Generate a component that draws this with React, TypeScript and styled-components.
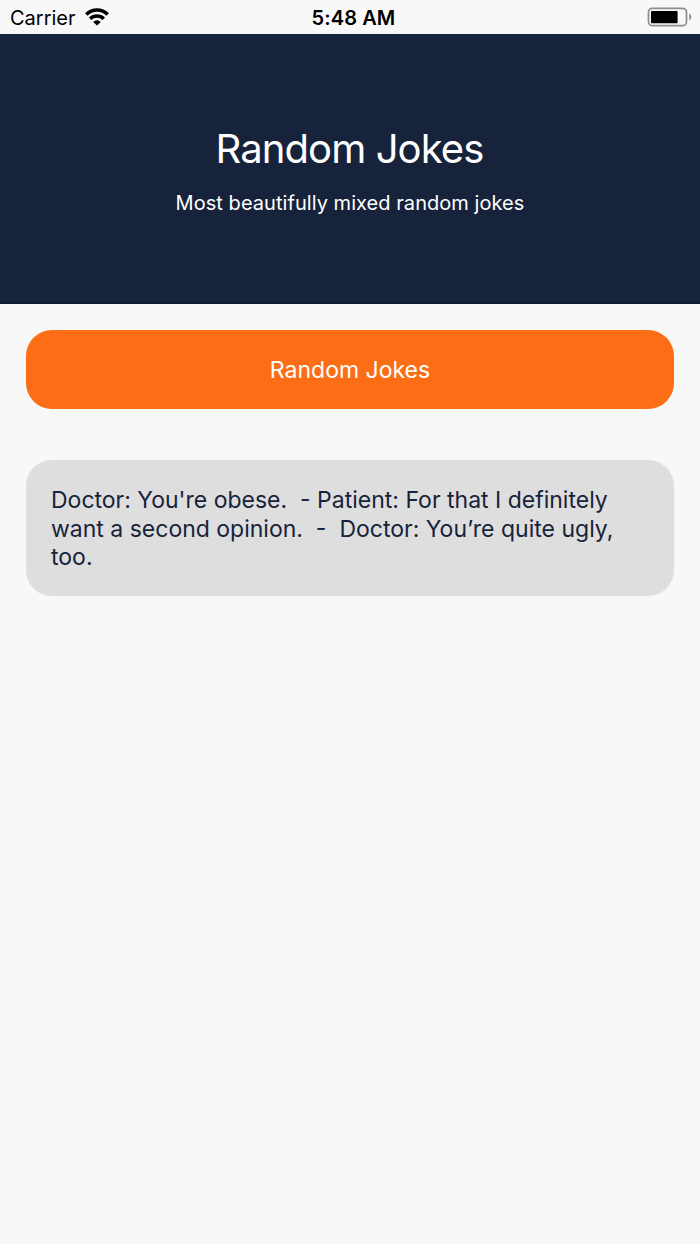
import * as React from 'react'
import styled, { createGlobalStyle } from 'styled-components'

const JOKE =
  "Doctor: You're obese.  - Patient: For that I definitely want a second opinion.  -  Doctor: You’re quite ugly, too."

const App: React.FC<{}> = () => {
  return (
    <React.Fragment>
      <GlobalStyle />
      <Screen>
        <StatusBar>
          <Carrier>
            <CarrierName>Carrier</CarrierName>
            <WifiIcon />
          </Carrier>
          <Clock>5:48 AM</Clock>
          <BatteryIcon />
        </StatusBar>
        <Header>
          <Title>Random Jokes</Title>
          <Subtitle>Most beautifully mixed random jokes</Subtitle>
        </Header>
        <Content>
          <JokeButton type="button">Random Jokes</JokeButton>
          <JokeCard>{JOKE}</JokeCard>
        </Content>
      </Screen>
    </React.Fragment>
  )
}

const WifiIcon: React.FC<{}> = () => (
  <svg width="24" height="18" viewBox="0 0 24 18">
    <g fill="none" stroke="#000" strokeWidth="3.5">
      <path d="M1.3 6.4a15.2 15.2 0 0 1 21.4 0" />
      <path d="M5.2 10.7a9.7 9.7 0 0 1 13.6 0" />
    </g>
    <path d="M12 17.6l-3.8-3.7a5.4 5.4 0 0 1 7.6 0z" />
  </svg>
)

const BatteryIcon: React.FC<{}> = () => (
  <svg width="45" height="20" viewBox="0 0 45 20">
    <rect
      x="1.5"
      y="1.3"
      width="38"
      height="17.4"
      rx="4"
      fill="none"
      stroke="#8f8f8f"
      strokeWidth="1.7"
    />
    <rect x="4" y="4" width="26.6" height="12.2" rx="0.8" />
    <path d="M42.2 6.6c2.9 1.4 2.9 5.4 0 6.8z" fill="#8f8f8f" />
  </svg>
)

const GlobalStyle = createGlobalStyle`
  * {
    box-sizing: border-box;
  }

  body {
    margin: 0;
    background: #f8f8f8;
    font-family: Inter, 'Liberation Sans', sans-serif;
  }
`

const Screen = styled.div`
  display: flex;
  flex-direction: column;
  min-height: 1244px;
  background: #f8f8f8;
`

const StatusBar = styled.div`
  display: grid;
  grid-template-columns: 1fr auto 1fr;
  align-items: center;
  height: 34px;
  padding: 0 8px 0 10px;
  color: #000;

  > svg {
    justify-self: end;
  }
`

const Carrier = styled.div`
  display: flex;
  align-items: center;
  gap: 9.5px;
`

const CarrierName = styled.span`
  padding-top: 2px;
  font-size: 20px;
  line-height: 24px;
`

const Clock = styled.span`
  padding: 2px 0 0 5px;
  font-size: 20px;
  font-weight: 600;
  line-height: 24px;
  letter-spacing: 0.1px;
`

const Header = styled.header`
  height: 270px;
  padding-top: 90px;
  background: #17233b;
  border-bottom: 2px solid #0f1b36;
  color: #fff;
  text-align: center;
`

const Title = styled.h1`
  margin: 0;
  padding-right: 1px;
  font-size: 40px;
  font-weight: 400;
  line-height: 50px;
  letter-spacing: -0.9px;
`

const Subtitle = styled.p`
  margin: 17px 0 0;
  font-size: 20px;
  line-height: 24px;
  letter-spacing: 0.05px;
`

const Content = styled.main`
  padding: 26px;
`

const JokeButton = styled.button`
  display: block;
  width: 100%;
  height: 79px;
  margin-bottom: 51px;
  border: 0;
  border-radius: 26px;
  background: #fb6e15;
  color: #fff;
  font-family: inherit;
  font-size: 23px;
`

const JokeCard = styled.div`
  height: 136px;
  padding: 26px 25px 24px;
  border-radius: 26px;
  background: #dedede;
  color: #17233b;
  font-size: 23px;
  line-height: 28.6px;
  white-space: pre-wrap;
`

export default App
